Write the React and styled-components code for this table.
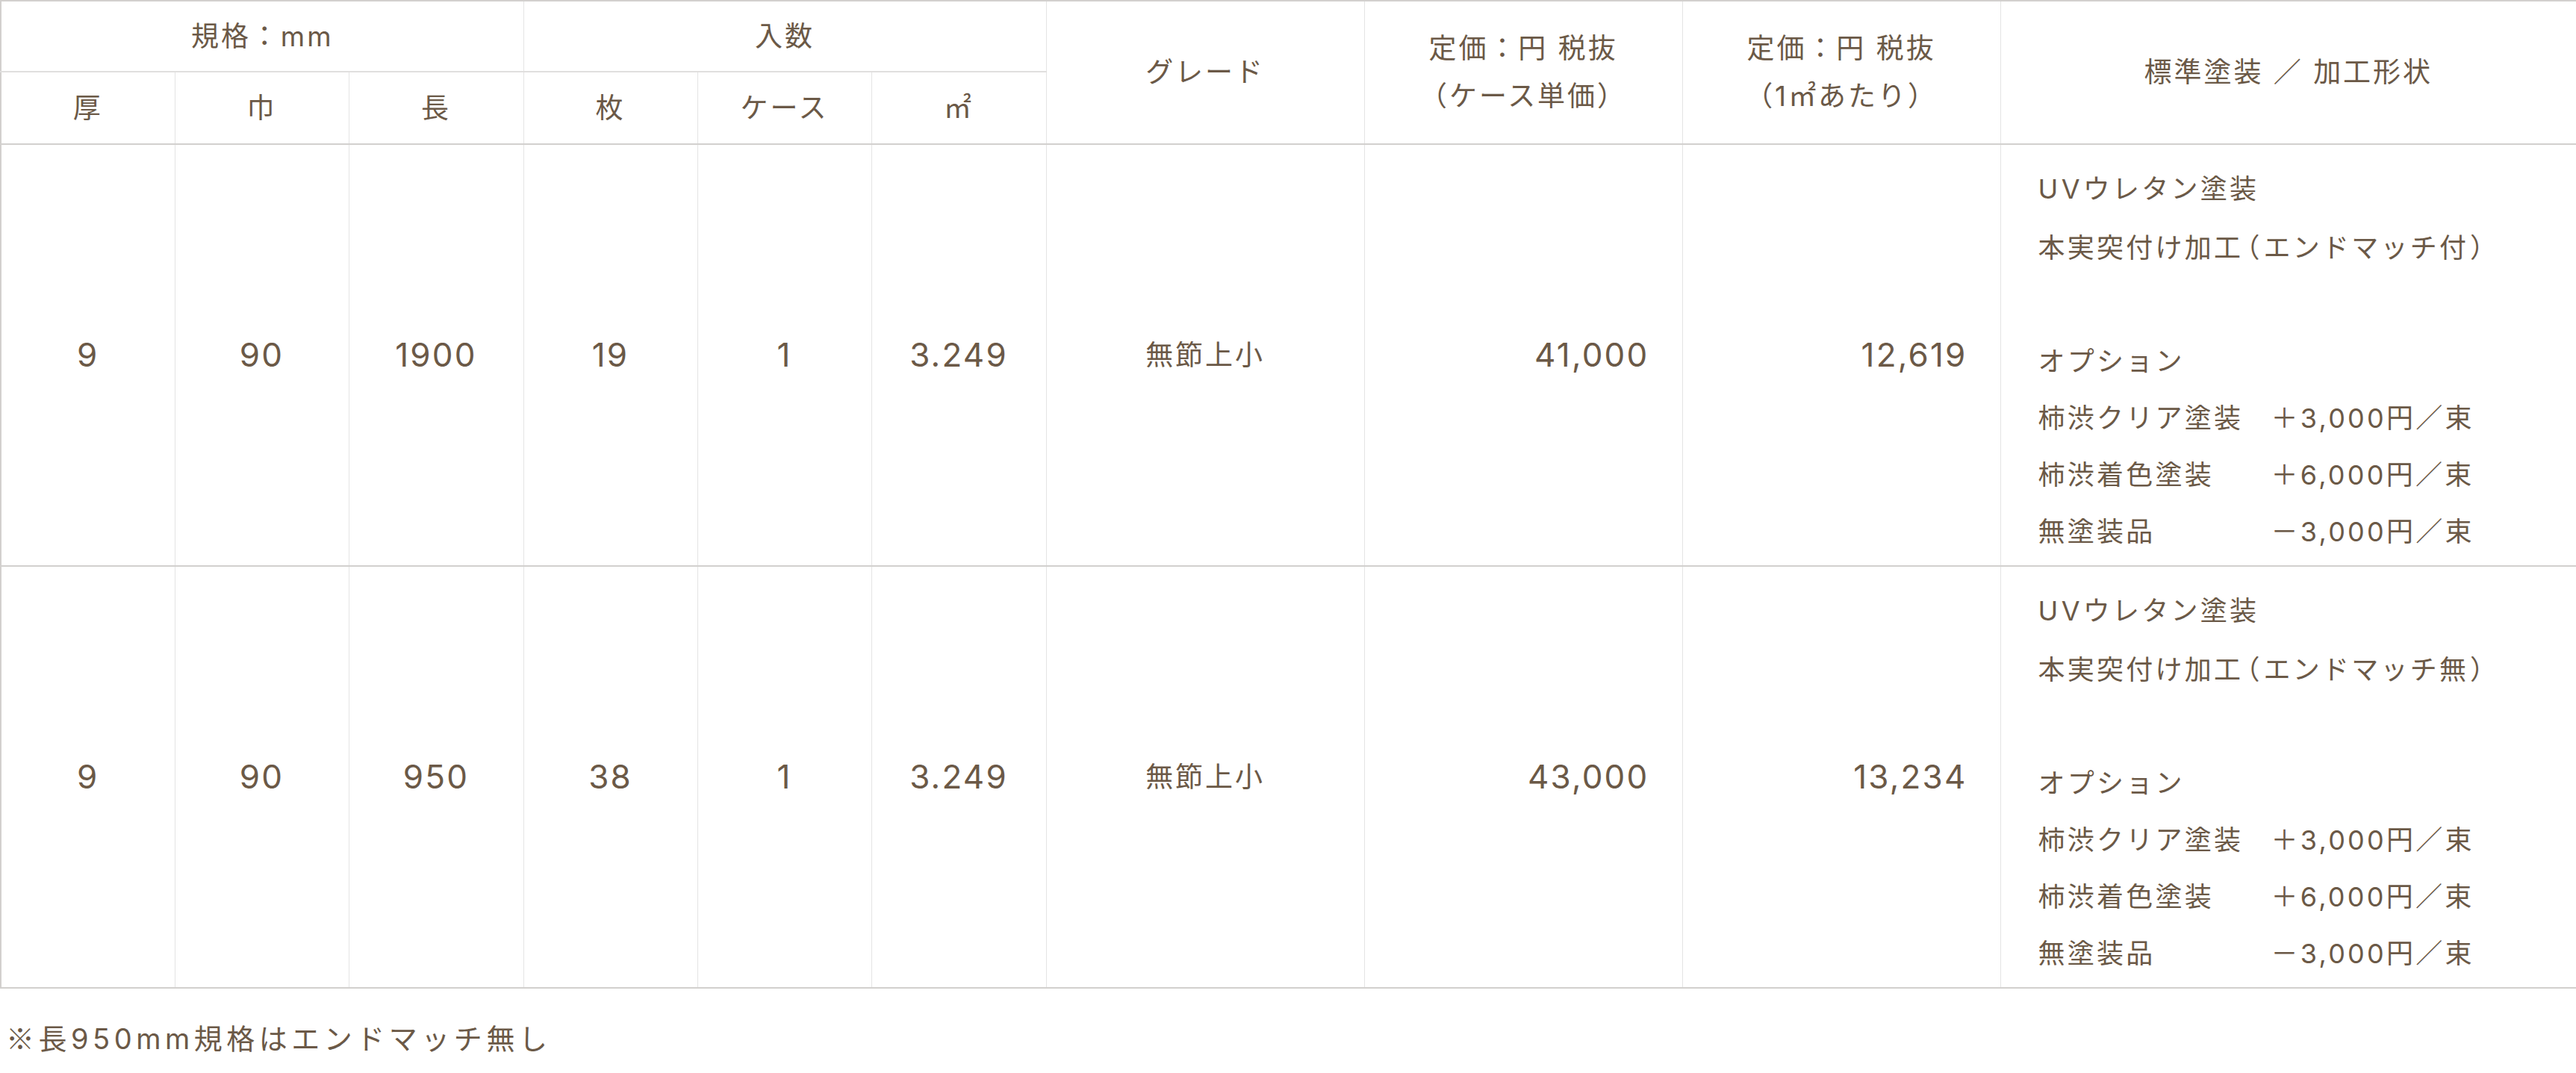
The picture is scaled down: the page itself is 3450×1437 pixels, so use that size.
import React from 'react';
import styled, { createGlobalStyle } from 'styled-components';

const Global = createGlobalStyle`
  html, body { margin: 0; padding: 0; background: #ffffff; }
  body {
    font-family: Inter, "Noto Sans CJK JP", sans-serif;
    color: #6b5947;
  }
`;

const Page = styled.div`
  width: 3450px;
`;

const Table = styled.table`
  width: 3450px;
  table-layout: fixed;
  border-collapse: collapse;
  border: 2px solid #d2d0ce;
`;

const Col = styled.col`
  width: ${(p) => p.$w}px;
`;

const HeadRow = styled.tr`
  height: ${(p) => p.$h}px;
`;

const Th = styled.th`
  font-weight: 400;
  font-size: 37px;
  letter-spacing: 0.08em;
  line-height: 64px;
  text-align: center;
  vertical-align: middle;
  padding: 0;
  border-left: 1px solid #e4e4e4;
  border-right: 1px solid #e4e4e4;
  border-bottom: 2px solid ${(p) => (p.$group ? '#e0dfde' : '#d2d0ce')};
`;

const BodyRow = styled.tr`
  height: 565px;
  border-bottom: 2px solid #d2d0ce;
`;

const Td = styled.td`
  padding: 0 ${(p) => (p.$right ? '44px' : '0')} 0 0;
  text-align: ${(p) => (p.$right ? 'right' : 'center')};
  vertical-align: middle;
  border-left: 1px solid #e4e4e4;
  border-right: 1px solid #e4e4e4;
  font-size: ${(p) => (p.$num ? '44px' : '37px')};
  letter-spacing: ${(p) => (p.$num ? '0.05em' : '0.08em')};
  line-height: 1.4;
`;

const SpecCell = styled.td`
  text-align: left;
  vertical-align: middle;
  padding: 14px 20px 0 50px;
  border-left: 1px solid #e4e4e4;
  font-size: 36px;
  line-height: 76px;
  letter-spacing: 0.09em;
  white-space: nowrap;
`;

const Line = styled.div``;

const Latin = styled.span`
  letter-spacing: 0.12em;
`;

const Paren = styled.span`
  font-family: "Noto Sans CJK JP", sans-serif;
  font-feature-settings: "palt";
  padding: 0 3px;
`;

const Gap = styled.div`
  height: 76px;
`;

const OptionRow = styled.div`
  display: grid;
  grid-template-columns: 312px auto;
`;

const Note = styled.p`
  margin: 35px 0 0;
  padding-left: 8px;
  font-size: 38px;
  line-height: 1.6;
  letter-spacing: 0.145em;
`;

const Mark = styled.span`
  font-family: "Noto Sans CJK JP", sans-serif;
`;

const rows = [
  {
    cells: ['9', '90', '1900', '19', '1', '3.249'],
    grade: '無節上小',
    price: '41,000',
    perM: '12,619',
    end: '付',
  },
  {
    cells: ['9', '90', '950', '38', '1', '3.249'],
    grade: '無節上小',
    price: '43,000',
    perM: '13,234',
    end: '無',
  },
];

const options = [
  ['柿渋クリア塗装', '＋3,000円／束'],
  ['柿渋着色塗装', '＋6,000円／束'],
  ['無塗装品', '－3,000円／束'],
];

export default function App() {
  return (
    <Page>
      <Global />
      <Table>
        <colgroup>
          <Col $w={233} />
          <Col $w={233} />
          <Col $w={234} />
          <Col $w={233} />
          <Col $w={233} />
          <Col $w={234} />
          <Col $w={426} />
          <Col $w={426} />
          <Col $w={426} />
          <Col $w={772} />
        </colgroup>
        <thead>
          <HeadRow $h={95}>
            <Th colSpan={3} $group>規格：mm</Th>
            <Th colSpan={3} $group>入数</Th>
            <Th rowSpan={2}>グレード</Th>
            <Th rowSpan={2}>
              定価：円 税抜
              <br />
              （ケース単価）
            </Th>
            <Th rowSpan={2}>
              定価：円 税抜
              <br />
              （1㎡あたり）
            </Th>
            <Th rowSpan={2}>標準塗装 ／ 加工形状</Th>
          </HeadRow>
          <HeadRow $h={97}>
            <Th>厚</Th>
            <Th>巾</Th>
            <Th>長</Th>
            <Th>枚</Th>
            <Th>ケース</Th>
            <Th>㎡</Th>
          </HeadRow>
        </thead>
        <tbody>
          {rows.map((r, i) => (
            <BodyRow key={i}>
              {r.cells.map((c, j) => (
                <Td key={j} $num>
                  {c}
                </Td>
              ))}
              <Td>{r.grade}</Td>
              <Td $num $right>
                {r.price}
              </Td>
              <Td $num $right>
                {r.perM}
              </Td>
              <SpecCell>
                <Line>
                  <Latin>UV</Latin>ウレタン塗装
                </Line>
                <Line>
                  本実突付け加工<Paren>（</Paren>エンドマッチ{r.end}
                  <Paren>）</Paren>
                </Line>
                <Gap />
                <Line>オプション</Line>
                {options.map(([name, cost]) => (
                  <OptionRow key={name}>
                    <span>{name}</span>
                    <span>{cost}</span>
                  </OptionRow>
                ))}
              </SpecCell>
            </BodyRow>
          ))}
        </tbody>
      </Table>
      <Note>
        <Mark>※</Mark>長950mm規格はエンドマッチ無し
      </Note>
    </Page>
  );
}
